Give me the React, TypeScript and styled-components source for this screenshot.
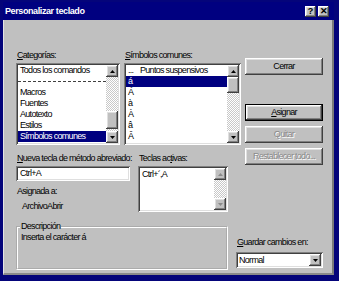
import React from 'react';
import styled, { createGlobalStyle } from 'styled-components';

const FONT = `"Liberation Sans", Arial, sans-serif`;

const GlobalStyle = createGlobalStyle`
    html, body {
        margin: 0;
        padding: 0;
        background: #04047a;
    }
    * {
        box-sizing: border-box;
    }
`;

const raised = `
    box-shadow: inset -1px -1px #404040, inset 1px 1px #ffffff,
        inset -2px -2px #808080, inset 2px 2px #dfdfdf;
`;

const sunken = `
    box-shadow: inset 1px 1px #808080, inset -1px -1px #ffffff,
        inset 2px 2px #404040, inset -2px -2px #dfdfdf;
`;

const Screen = styled.div`
    width: 339px;
    height: 281px;
    padding: 2px 5px 6px 3px;
    display: flex;
    flex-direction: column;
    background: #04047a;
    font-family: ${FONT};
    font-size: 9px;
    line-height: 11px;
    letter-spacing: -0.7px;
    color: #000;
`;

const Window = styled.div`
    flex: 1;
    display: flex;
    flex-direction: column;
`;

const TitleBar = styled.div`
    height: 18px;
    display: flex;
    align-items: center;
    justify-content: space-between;
    padding: 0 5px 0 2px;
    background: #000080;
`;

const TitleText = styled.span`
    color: #fff;
    font-weight: bold;
    font-size: 9px;
    letter-spacing: -0.4px;
`;

const TitleButtons = styled.div`
    display: flex;
    gap: 2px;
`;

const TitleButton = styled.div`
    width: 11px;
    height: 11px;
    display: flex;
    align-items: center;
    justify-content: center;
    background: #c0c0c0;
    font-weight: bold;
    font-size: 9px;
    line-height: 9px;
    letter-spacing: 0;
    ${raised}
`;

const Body = styled.div`
    flex: 1;
    display: flex;
    gap: 4px;
    padding: 30px 8px 0 12px;
    background: #c0c0c0;
    border-left: 1px solid #e4e4e4;
    border-right: 2px solid #7a7a7a;
    border-bottom: 2px solid #8a8a8a;
`;

const LeftArea = styled.div`
    width: 225px;
    display: flex;
    flex-direction: column;
`;

const Row = styled.div<{ $gap: number; $top?: number }>`
    display: flex;
    gap: ${p => p.$gap}px;
    margin-top: ${p => p.$top ?? 0}px;
`;

const Column = styled.div<{ $width: number }>`
    width: ${p => p.$width}px;
    display: flex;
    flex-direction: column;
`;

const Label = styled.div<{ $top?: number; $indent?: number }>`
    height: 11px;
    white-space: nowrap;
    margin-top: ${p => p.$top ?? 0}px;
    padding-left: ${p => p.$indent ?? 1}px;
`;

const Key = styled.span`
    text-decoration: underline;
`;

const ListBox = styled.div<{ $height: number }>`
    margin-top: 2px;
    height: ${p => p.$height}px;
    display: flex;
    padding: 2px;
    background: #fff;
    ${sunken}
`;

const Items = styled.div`
    flex: 1;
    display: flex;
    flex-direction: column;
    overflow: hidden;
`;

const Item = styled.div<{ $selected?: boolean }>`
    height: 11px;
    padding-left: 2px;
    white-space: nowrap;
    background: ${p => (p.$selected ? '#000080' : 'transparent')};
    color: ${p => (p.$selected ? '#fff' : '#000')};
`;

const Separator = styled.div`
    height: 11px;
    display: flex;
    align-items: center;
    &::after {
        content: '';
        flex: 1;
        border-top: 1px dashed #404040;
    }
`;

const Ellipsis = styled.span`
    display: inline-block;
    width: 12px;
`;

const ScrollBar = styled.div`
    width: 12px;
    display: flex;
    flex-direction: column;
`;

const ArrowButton = styled.div<{ $disabled?: boolean }>`
    height: 12px;
    display: flex;
    align-items: center;
    justify-content: center;
    background: #c0c0c0;
    color: ${p => (p.$disabled ? '#8a8a8a' : '#000')};
    ${raised}
`;

const Track = styled.div`
    flex: 1;
    display: flex;
    flex-direction: column;
    background-color: #fff;
    background-image: repeating-conic-gradient(#c8c8c8 0 25%, #ffffff 0 50%);
    background-size: 2px 2px;
`;

const Thumb = styled.div<{ $offset: number; $size: number }>`
    margin-top: ${p => p.$offset}px;
    height: ${p => p.$size}px;
    background: #c0c0c0;
    ${raised}
`;

const Field = styled.div<{ $height: number }>`
    margin-top: 2px;
    height: ${p => p.$height}px;
    padding: 2px 4px;
    background: #fff;
    white-space: nowrap;
    ${sunken}
`;

const KeysBox = styled.div`
    margin-top: 2px;
    height: 46px;
    display: flex;
    padding: 2px;
    background: #fff;
    ${sunken}
`;

const KeysText = styled.div`
    flex: 1;
    padding: 1px 2px;
`;

const GroupBox = styled.fieldset`
    margin: 9px 0 0 0;
    width: 212px;
    height: 49px;
    padding: 0 3px;
    border: 2px groove #ffffff;
    min-width: 0;
`;

const Legend = styled.legend`
    padding: 0 1px;
    margin-left: -1px;
`;

const RightArea = styled.div`
    width: 78px;
    display: flex;
    flex-direction: column;
    padding-top: 8px;
`;

const Button = styled.div<{ $top: number; $disabled?: boolean; $default?: boolean }>`
    margin-top: ${p => p.$top}px;
    height: 17px;
    display: flex;
    align-items: center;
    justify-content: center;
    white-space: nowrap;
    background: #c0c0c0;
    color: ${p => (p.$disabled ? '#8a8a8a' : '#000')};
    text-shadow: ${p => (p.$disabled ? '1px 1px #ffffff' : 'none')};
    border: ${p => (p.$default ? '1px solid #000' : 'none')};
    ${raised}
`;

const SaveBlock = styled.div`
    margin-top: 72px;
    margin-left: -9px;
    width: 87px;
    display: flex;
    flex-direction: column;
`;

const Select = styled.div`
    margin-top: 4px;
    height: 16px;
    display: flex;
    align-items: center;
    padding: 2px 2px 2px 3px;
    background: #fff;
    ${sunken}
`;

const SelectValue = styled.span`
    flex: 1;
`;

const DropButton = styled(ArrowButton)`
    width: 12px;
    height: 12px;
`;

const Arrow = ({ down }: { down?: boolean }) => (
    <svg width="5" height="3" viewBox="0 0 5 3">
        <polygon points={down ? '0,0 5,0 2.5,3' : '0,3 5,3 2.5,0'} fill="currentColor" />
    </svg>
);

const Scroll = ({ offset, size, disabled }: { offset: number; size: number; disabled?: boolean }) => (
    <ScrollBar>
        <ArrowButton $disabled={disabled}><Arrow /></ArrowButton>
        <Track>{size > 0 && <Thumb $offset={offset} $size={size} />}</Track>
        <ArrowButton $disabled={disabled}><Arrow down /></ArrowButton>
    </ScrollBar>
);

const categories = ['Macros', 'Fuentes', 'Autotexto', 'Estilos'];
const symbols = ['Á', 'à', 'À', 'â', 'Â'];

const App = () => {
    return (
        <>
            <GlobalStyle />
            <Screen>
                <Window>
                    <TitleBar>
                        <TitleText>Personalizar teclado</TitleText>
                        <TitleButtons>
                            <TitleButton>?</TitleButton>
                            <TitleButton>✕</TitleButton>
                        </TitleButtons>
                    </TitleBar>
                    <Body>
                        <LeftArea>
                            <Row $gap={4}>
                                <Column $width={104}>
                                    <Label><Key>C</Key>ategorías:</Label>
                                    <ListBox $height={82}>
                                        <Items>
                                            <Item>Todos los comandos</Item>
                                            <Separator />
                                            {categories.map(c => <Item key={c}>{c}</Item>)}
                                            <Item $selected>Símbolos comunes</Item>
                                        </Items>
                                        <Scroll offset={34} size={18} />
                                    </ListBox>
                                </Column>
                                <Column $width={117}>
                                    <Label><Key>S</Key>ímbolos comunes:</Label>
                                    <ListBox $height={82}>
                                        <Items>
                                            <Item><Ellipsis>...</Ellipsis>Puntos suspensivos</Item>
                                            <Item $selected>á</Item>
                                            {symbols.map(s => <Item key={s}>{s}</Item>)}
                                        </Items>
                                        <Scroll offset={0} size={16} />
                                    </ListBox>
                                </Column>
                            </Row>
                            <Row $gap={8} $top={8}>
                                <Column $width={114}>
                                    <Label><Key>N</Key>ueva tecla de método abreviado:</Label>
                                    <Field $height={15}>Ctrl+A</Field>
                                    <Label $top={5}>Asignada a:</Label>
                                    <Label $top={4} $indent={6}>ArchivoAbrir</Label>
                                </Column>
                                <Column $width={90}>
                                    <Label>Teclas ac<Key>t</Key>ivas:</Label>
                                    <KeysBox>
                                        <KeysText>Ctrl+´,A</KeysText>
                                        <Scroll offset={0} size={0} disabled />
                                    </KeysBox>
                                </Column>
                            </Row>
                            <GroupBox>
                                <Legend>Descripción</Legend>
                                <div>Inserta el carácter á</div>
                            </GroupBox>
                        </LeftArea>
                        <RightArea>
                            <Button $top={0}>Cerrar</Button>
                            <Button $top={29} $default><span><Key>A</Key>signar</span></Button>
                            <Button $top={5} $disabled>Quitar</Button>
                            <Button $top={5} $disabled>Restablecer todo...</Button>
                            <SaveBlock>
                                <Label><Key>G</Key>uardar cambios en:</Label>
                                <Select>
                                    <SelectValue>Normal</SelectValue>
                                    <DropButton><Arrow down /></DropButton>
                                </Select>
                            </SaveBlock>
                        </RightArea>
                    </Body>
                </Window>
            </Screen>
        </>
    );
};

export default App;
